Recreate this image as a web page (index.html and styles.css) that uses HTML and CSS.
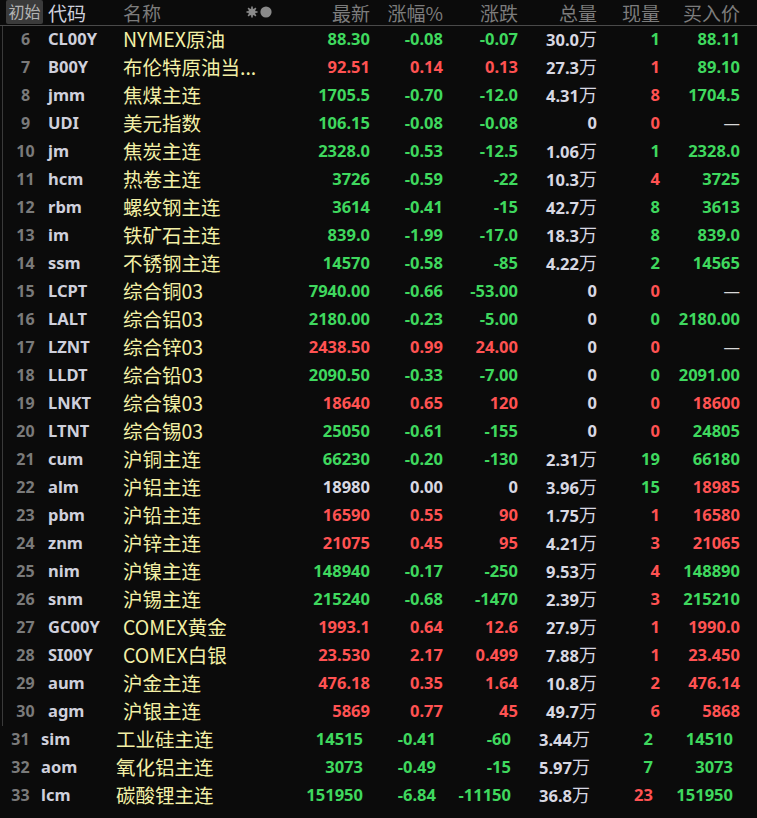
FILE: index.html
```html
<!DOCTYPE html>
<html lang="zh-CN">
<head>
<meta charset="utf-8">
<title>行情列表</title>
<link rel="stylesheet" href="styles.css">
</head>
<body>
<div class="board">
  <div class="row head">
    <div class="c-num"><span class="btn">初始</span></div>
    <div class="c-code">代码</div>
    <div class="c-name"><span class="title">名称</span><svg class="icons" width="28" height="12" viewBox="0 0 28 12"><g fill="#8a8a8a"><circle cx="6" cy="6" r="3.6"/><rect x="5.2" y="0.5" width="1.6" height="11"/><rect x="0.5" y="5.2" width="11" height="1.6"/><rect x="5.2" y="0.5" width="1.6" height="11" transform="rotate(45 6 6)"/><rect x="5.2" y="0.5" width="1.6" height="11" transform="rotate(-45 6 6)"/><circle cx="20" cy="6" r="5.6"/></g></svg></div>
    <div class="n">最新</div>
    <div class="n">涨幅%</div>
    <div class="n">涨跌</div>
    <div class="n">总量</div>
    <div class="n">现量</div>
    <div class="n">买入价</div>
  </div>

  <div class="block top">
    <div class="row"><div class="c-num">6</div><div class="c-code">CL00Y</div><div class="c-name">NYMEX原油</div><div class="n g">88.30</div><div class="n g">-0.08</div><div class="n g">-0.07</div><div class="n w">30.0<span class="wan">万</span></div><div class="n g">1</div><div class="n g">88.11</div></div>
    <div class="row"><div class="c-num">7</div><div class="c-code">B00Y</div><div class="c-name">布伦特原油当...</div><div class="n r">92.51</div><div class="n r">0.14</div><div class="n r">0.13</div><div class="n w">27.3<span class="wan">万</span></div><div class="n r">1</div><div class="n g">89.10</div></div>
    <div class="row"><div class="c-num">8</div><div class="c-code">jmm</div><div class="c-name">焦煤主连</div><div class="n g">1705.5</div><div class="n g">-0.70</div><div class="n g">-12.0</div><div class="n w">4.31<span class="wan">万</span></div><div class="n r">8</div><div class="n g">1704.5</div></div>
    <div class="row"><div class="c-num">9</div><div class="c-code">UDI</div><div class="c-name">美元指数</div><div class="n g">106.15</div><div class="n g">-0.08</div><div class="n g">-0.08</div><div class="n w">0</div><div class="n r">0</div><div class="n w dash">—</div></div>
    <div class="row"><div class="c-num">10</div><div class="c-code">jm</div><div class="c-name">焦炭主连</div><div class="n g">2328.0</div><div class="n g">-0.53</div><div class="n g">-12.5</div><div class="n w">1.06<span class="wan">万</span></div><div class="n g">1</div><div class="n g">2328.0</div></div>
    <div class="row"><div class="c-num">11</div><div class="c-code">hcm</div><div class="c-name">热卷主连</div><div class="n g">3726</div><div class="n g">-0.59</div><div class="n g">-22</div><div class="n w">10.3<span class="wan">万</span></div><div class="n r">4</div><div class="n g">3725</div></div>
    <div class="row"><div class="c-num">12</div><div class="c-code">rbm</div><div class="c-name">螺纹钢主连</div><div class="n g">3614</div><div class="n g">-0.41</div><div class="n g">-15</div><div class="n w">42.7<span class="wan">万</span></div><div class="n g">8</div><div class="n g">3613</div></div>
    <div class="row"><div class="c-num">13</div><div class="c-code">im</div><div class="c-name">铁矿石主连</div><div class="n g">839.0</div><div class="n g">-1.99</div><div class="n g">-17.0</div><div class="n w">18.3<span class="wan">万</span></div><div class="n g">8</div><div class="n g">839.0</div></div>
    <div class="row"><div class="c-num">14</div><div class="c-code">ssm</div><div class="c-name">不锈钢主连</div><div class="n g">14570</div><div class="n g">-0.58</div><div class="n g">-85</div><div class="n w">4.22<span class="wan">万</span></div><div class="n g">2</div><div class="n g">14565</div></div>
    <div class="row"><div class="c-num">15</div><div class="c-code">LCPT</div><div class="c-name">综合铜03</div><div class="n g">7940.00</div><div class="n g">-0.66</div><div class="n g">-53.00</div><div class="n w">0</div><div class="n r">0</div><div class="n w dash">—</div></div>
    <div class="row"><div class="c-num">16</div><div class="c-code">LALT</div><div class="c-name">综合铝03</div><div class="n g">2180.00</div><div class="n g">-0.23</div><div class="n g">-5.00</div><div class="n w">0</div><div class="n g">0</div><div class="n g">2180.00</div></div>
    <div class="row"><div class="c-num">17</div><div class="c-code">LZNT</div><div class="c-name">综合锌03</div><div class="n r">2438.50</div><div class="n r">0.99</div><div class="n r">24.00</div><div class="n w">0</div><div class="n r">0</div><div class="n w dash">—</div></div>
    <div class="row"><div class="c-num">18</div><div class="c-code">LLDT</div><div class="c-name">综合铅03</div><div class="n g">2090.50</div><div class="n g">-0.33</div><div class="n g">-7.00</div><div class="n w">0</div><div class="n g">0</div><div class="n g">2091.00</div></div>
    <div class="row"><div class="c-num">19</div><div class="c-code">LNKT</div><div class="c-name">综合镍03</div><div class="n r">18640</div><div class="n r">0.65</div><div class="n r">120</div><div class="n w">0</div><div class="n r">0</div><div class="n r">18600</div></div>
    <div class="row"><div class="c-num">20</div><div class="c-code">LTNT</div><div class="c-name">综合锡03</div><div class="n g">25050</div><div class="n g">-0.61</div><div class="n g">-155</div><div class="n w">0</div><div class="n r">0</div><div class="n g">24805</div></div>
    <div class="row"><div class="c-num">21</div><div class="c-code">cum</div><div class="c-name">沪铜主连</div><div class="n g">66230</div><div class="n g">-0.20</div><div class="n g">-130</div><div class="n w">2.31<span class="wan">万</span></div><div class="n g">19</div><div class="n g">66180</div></div>
    <div class="row"><div class="c-num">22</div><div class="c-code">alm</div><div class="c-name">沪铝主连</div><div class="n w">18980</div><div class="n w">0.00</div><div class="n w">0</div><div class="n w">3.96<span class="wan">万</span></div><div class="n g">15</div><div class="n r">18985</div></div>
    <div class="row"><div class="c-num">23</div><div class="c-code">pbm</div><div class="c-name">沪铅主连</div><div class="n r">16590</div><div class="n r">0.55</div><div class="n r">90</div><div class="n w">1.75<span class="wan">万</span></div><div class="n r">1</div><div class="n r">16580</div></div>
    <div class="row"><div class="c-num">24</div><div class="c-code">znm</div><div class="c-name">沪锌主连</div><div class="n r">21075</div><div class="n r">0.45</div><div class="n r">95</div><div class="n w">4.21<span class="wan">万</span></div><div class="n r">3</div><div class="n r">21065</div></div>
    <div class="row"><div class="c-num">25</div><div class="c-code">nim</div><div class="c-name">沪镍主连</div><div class="n g">148940</div><div class="n g">-0.17</div><div class="n g">-250</div><div class="n w">9.53<span class="wan">万</span></div><div class="n r">4</div><div class="n g">148890</div></div>
    <div class="row"><div class="c-num">26</div><div class="c-code">snm</div><div class="c-name">沪锡主连</div><div class="n g">215240</div><div class="n g">-0.68</div><div class="n g">-1470</div><div class="n w">2.39<span class="wan">万</span></div><div class="n r">3</div><div class="n g">215210</div></div>
    <div class="row"><div class="c-num">27</div><div class="c-code">GC00Y</div><div class="c-name">COMEX黄金</div><div class="n r">1993.1</div><div class="n r">0.64</div><div class="n r">12.6</div><div class="n w">27.9<span class="wan">万</span></div><div class="n r">1</div><div class="n r">1990.0</div></div>
    <div class="row"><div class="c-num">28</div><div class="c-code">SI00Y</div><div class="c-name">COMEX白银</div><div class="n r">23.530</div><div class="n r">2.17</div><div class="n r">0.499</div><div class="n w">7.88<span class="wan">万</span></div><div class="n r">1</div><div class="n r">23.450</div></div>
    <div class="row"><div class="c-num">29</div><div class="c-code">aum</div><div class="c-name">沪金主连</div><div class="n r">476.18</div><div class="n r">0.35</div><div class="n r">1.64</div><div class="n w">10.8<span class="wan">万</span></div><div class="n r">2</div><div class="n r">476.14</div></div>
    <div class="row"><div class="c-num">30</div><div class="c-code">agm</div><div class="c-name">沪银主连</div><div class="n r">5869</div><div class="n r">0.77</div><div class="n r">45</div><div class="n w">49.7<span class="wan">万</span></div><div class="n r">6</div><div class="n r">5868</div></div>
  </div>

  <div class="block bottom">
    <div class="row"><div class="c-num">31</div><div class="c-code">sim</div><div class="c-name">工业硅主连</div><div class="n g">14515</div><div class="n g">-0.41</div><div class="n g">-60</div><div class="n w">3.44<span class="wan">万</span></div><div class="n g">2</div><div class="n g">14510</div></div>
    <div class="row"><div class="c-num">32</div><div class="c-code">aom</div><div class="c-name">氧化铝主连</div><div class="n g">3073</div><div class="n g">-0.49</div><div class="n g">-15</div><div class="n w">5.97<span class="wan">万</span></div><div class="n g">7</div><div class="n g">3073</div></div>
    <div class="row"><div class="c-num">33</div><div class="c-code">lcm</div><div class="c-name">碳酸锂主连</div><div class="n g">151950</div><div class="n g">-6.84</div><div class="n g">-11150</div><div class="n w">36.8<span class="wan">万</span></div><div class="n r">23</div><div class="n g">151950</div></div>
  </div>
</div>
</body>
</html>
```

FILE: styles.css
```css
html, body {
  margin: 0;
  padding: 0;
  background: #0b0b0b;
}

.board {
  width: 757px;
  height: 818px;
  overflow: hidden;
  background: #0b0b0b;
  font-family: "Noto Sans", "Noto Sans CJK SC", sans-serif;
}

.row {
  display: grid;
  grid-template-columns: 48px 75px 165px 82px 73px 75px 79px 63px 80px;
  box-sizing: border-box;
  height: 28px;
  padding-bottom: 3px;
  align-items: center;
  font-size: 16.5px;
  line-height: 24px;
  font-weight: 700;
  white-space: nowrap;
}

.head {
  height: 26px;
  padding-bottom: 2px;
  border-bottom: 1px solid #4a4a4a;
  font-family: "Noto Sans CJK SC", sans-serif;
  font-weight: 400;
  font-size: 19px;
  line-height: 23px;
  color: #7c7c7c;
}

.btn {
  display: inline-block;
  width: 37px;
  height: 24px;
  margin-left: 6px;
  background: #3b3b3b;
  border-radius: 2px;
  color: #b4b4b4;
  font-size: 16px;
  line-height: 22px;
  text-align: center;
}

.head .c-num {
  text-align: left;
  align-self: start;
}

.title {
  display: inline-block;
  vertical-align: top;
  line-height: 23px;
}

.icons {
  display: inline-block;
  vertical-align: top;
  margin-left: 85px;
  margin-top: 5px;
}

.block.top {
  border-left: 1px solid #3a3a3a;
  margin-left: 2px;
}

.block.top .row {
  grid-template-columns: 45px 75px 165px 82px 73px 75px 79px 63px 80px;
}

.block.bottom .row {
  grid-template-columns: 41px 75px 165px 82px 73px 75px 79px 63px 80px;
}

.c-num {
  text-align: center;
  color: #7a7a7a;
  font-size: 16px;
}

.c-code {
  color: #cfd0dc;
}

.c-name {
  font-family: "Noto Sans CJK SC", sans-serif;
  font-weight: 400;
  font-size: 19.5px;
  color: #f3f0a6;
}

.head .c-name {
  color: #7c7c7c;
  font-size: 19px;
}

.n {
  text-align: right;
}

.g { color: #3fd85e; }
.r { color: #ff5252; }
.w { color: #d8d8e2; }

.wan {
  font-family: "Noto Sans CJK SC", sans-serif;
  font-weight: 400;
  font-size: 18px;
}

.dash {
  color: #d8d8d8;
  font-weight: 400;
}
```
